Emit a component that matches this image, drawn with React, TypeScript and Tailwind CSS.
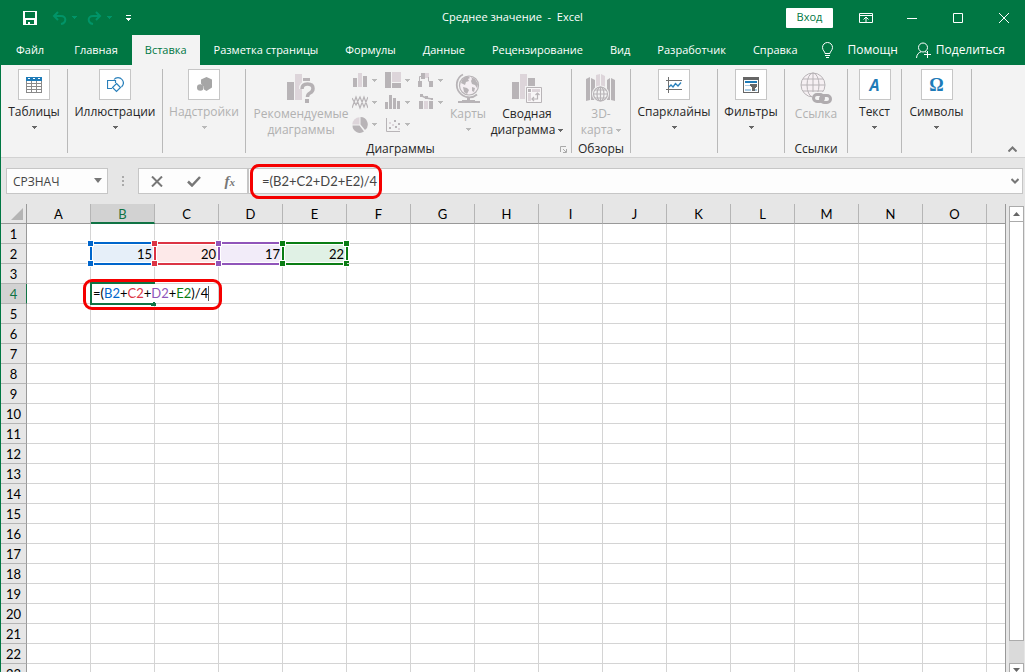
import type { ReactNode } from "react";
import clsx from "clsx";

const tabs = [
  "Файл",
  "Главная",
  "Вставка",
  "Разметка страницы",
  "Формулы",
  "Данные",
  "Рецензирование",
  "Вид",
  "Разработчик",
  "Справка",
];

const columns = "ABCDEFGHIJKLMNO".split("");
const rows = Array.from({ length: 23 }, (_, i) => i + 1);

const ranges: Record<string, { value: number; box: string; handle: string }> = {
  B: { value: 15, box: "border-[#0066cc] bg-[#e6eff9]", handle: "bg-[#0066cc]" },
  C: { value: 20, box: "border-[#dc3545] bg-[#fde9e9]", handle: "bg-[#dc3545]" },
  D: { value: 17, box: "border-[#9055ba] bg-[#f2ecf9]", handle: "bg-[#9055ba]" },
  E: { value: 22, box: "border-[#0a7d14] bg-[#e0f1e5]", handle: "bg-[#0a7d14]" },
};

function Caret({ className = "text-[#666]" }: { className?: string }) {
  return (
    <svg className={clsx("shrink-0", className)} width="5" height="3" viewBox="0 0 5 3" fill="currentColor" shapeRendering="crispEdges">
      <path d="M0 0h5v1H0zM1 1h3v1H1zM2 2h1v1H2z" />
    </svg>
  );
}

function TitleBar() {
  return (
    <header className="relative flex h-[35px] items-center justify-between text-white">
      <div className="flex items-center pl-[23px]">
        <button aria-label="Сохранить">
          <svg width="14" height="14" viewBox="0 0 14 14" shapeRendering="crispEdges">
            <path fill="#fff" fillRule="evenodd" d="M0 0h14v14H0zM2 1v6h10V1zM3 9v4h2v-2h2v2h4V9z" />
          </svg>
        </button>
        <button aria-label="Отменить" className="ml-[15px] flex items-center gap-[5px] text-[#009468]">
          <svg width="15" height="14" viewBox="0 0 15 14" fill="none" stroke="currentColor" strokeWidth="2">
            <path d="M6 1L2 5l4 4M2 5h7c6 0 5.500 7 0 8" />
          </svg>
          <Caret className="text-[#009468]" />
        </button>
        <button aria-label="Вернуть" className="ml-[10px] flex items-center gap-[5px] text-[#009468]">
          <svg width="15" height="14" viewBox="0 0 15 14" fill="none" stroke="currentColor" strokeWidth="2">
            <path d="M9 1l4 4-4 4M13 5H6C0 5 .5 12 6 13" />
          </svg>
          <Caret className="text-[#009468]" />
        </button>
        <button aria-label="Настройка панели" className="ml-[14px]">
          <svg width="6" height="6" viewBox="0 0 6 6" fill="#fff" shapeRendering="crispEdges">
            <path d="M0 0h5v1H0zM0 3h5v1H0zM1 4h3v1H1zM2 5h1v1H2z" />
          </svg>
        </button>
      </div>
      <h1 className="absolute left-1/2 -translate-x-1/2 whitespace-pre text-[11px]">Среднее значение  -  Excel</h1>
      <div className="flex items-center pr-4">
        <button className="mr-[26px] h-5 w-[47px] rounded-[1px] bg-white pb-px text-[11px] leading-[18px] text-[#007743]">Вход</button>
        <button aria-label="Параметры ленты" className="mr-[34px]">
          <svg width="14" height="10" viewBox="0 0 14 10" fill="none" stroke="#fff">
            <path d="M.5.5h13v9H.5zM.5 2.500h13M7 9V4M4.500 6.500L7 4l2.500 2.500" />
          </svg>
        </button>
        <button aria-label="Свернуть" className="mr-9">
          <svg width="10" height="10" viewBox="0 0 10 10" stroke="#fff"><path d="M0 5.500h10" /></svg>
        </button>
        <button aria-label="Развернуть" className="mr-9">
          <svg width="10" height="10" viewBox="0 0 10 10" fill="none" stroke="#fff"><path d="M.5.5h9v9h-9z" /></svg>
        </button>
        <button aria-label="Закрыть">
          <svg width="10" height="10" viewBox="0 0 10 10" stroke="#fff"><path d="M0 0l10 10M10 0L0 10" /></svg>
        </button>
      </div>
    </header>
  );
}

function TabBar() {
  return (
    <nav className="flex h-[30px] items-stretch justify-between whitespace-nowrap pl-[3px] text-white">
      <div className="flex gap-px text-[11px]">
        {tabs.map((tab) => (
          <button
            key={tab}
            className={clsx(
              "px-[13px]",
              tab === "Файл" && "mr-[3px]",
              tab === "Вставка" && "bg-[#f3f3f3] text-[#007743]",
            )}
          >
            {tab}
          </button>
        ))}
      </div>
      <div className="flex items-center pr-5 text-xs">
        <button className="flex items-center gap-[13px]">
          <svg width="13" height="17" viewBox="0 0 13 17" fill="none" stroke="#fff">
            <path d="M4 11.500C4 9.500 1.500 8.500 1.500 5.500a5 5 0 0 1 10 0C11.500 8.500 9 9.500 9 11.500zM4 13.500h5M5 15.500h3" />
          </svg>
          Помощн
        </button>
        <button className="ml-[18px] flex items-center gap-1">
          <svg width="16" height="17" viewBox="0 0 16 17" fill="none" stroke="#fff">
            <circle cx="7" cy="5.500" r="4.500" />
            <path d="M.5 16c.3-3.500 2-5.500 4.500-6.200M9 9.500l1.500 1M11.500 9v7M8 12.500h7" />
          </svg>
          Поделиться
        </button>
      </div>
    </nav>
  );
}

function Group({ className, children }: { className: string; children: ReactNode }) {
  return <section className={clsx("relative shrink-0 border-r border-[#b9b9b9]", className)}>{children}</section>;
}

// collapsed ribbon group: framed icon, label and a drop-down arrow
function CollapsedGroup({ label, width, disabled, children }: { label: string; width: string; disabled?: boolean; children: ReactNode }) {
  return (
    <Group className={width}>
      <button
        disabled={disabled}
        className={clsx("flex w-full flex-col items-center whitespace-nowrap", disabled ? "text-[#b1b1b1]" : "text-[#262626]")}
      >
        <span className="flex h-[31px] w-8 items-center justify-center border border-[#c6c6c6] bg-white">{children}</span>
        <span className="mt-1 mb-[6px] leading-4">{label}</span>
        <Caret className={disabled ? "text-[#b9b9b9]" : "text-[#666]"} />
      </button>
    </Group>
  );
}

function GroupTitle({ children, className }: { children: ReactNode; className?: string }) {
  return <h2 className={clsx("absolute inset-x-0 bottom-[-4px] text-center leading-4 text-[#262626]", className)}>{children}</h2>;
}

const D = "#b8b4b7";
const L = "#ddd5da";

function TableIcon() {
  return (
    <svg width="16" height="16" viewBox="0 0 16 16" shapeRendering="crispEdges">
      <path fill="#8a8a8a" d="M0 4h16v12H0z" />
      <path fill="#1e7bb8" d="M0 0h16v4H0z" />
      <path fill="#fff" d="M2 1h2v1H2zM7 1h2v1H7zM12 1h2v1h-2zM1 4h4v2H1zM6 4h4v2H6zM11 4h4v2h-4zM1 7h4v2H1zM6 7h4v2H6zM11 7h4v2h-4zM1 10h4v2H1zM6 10h4v2H6zM11 10h4v2h-4zM1 13h4v2H1zM6 13h4v2H6zM11 13h4v2h-4z" />
    </svg>
  );
}

function ShapesIcon() {
  return (
    <svg width="17" height="16" viewBox="0 0 17 16" fill="none" stroke="#2a80bb">
      <path d="M5 11.500H.5v-8h8V6M7 2.500C9 0 13 0 15 2.500s1.500 5.500-.5 7.500" strokeWidth="1.200" />
      <path d="M9.500 6.500l4 4-4 4-4-4z" strokeWidth="1.200" />
    </svg>
  );
}

function AddinsIcon() {
  return (
    <svg width="15" height="15" viewBox="0 0 15 15" fill="#a6a6a6">
      <path d="M9.500 0L15 2.500v8L9.500 14 7 12.500V10L4 6.500v-4z" />
      <circle cx="3.300" cy="10.500" r="3.300" />
    </svg>
  );
}

function SparklineIcon() {
  return (
    <svg width="16" height="16" viewBox="0 0 16 16" fill="none">
      <path d="M2.500 0v16M0 3.500h16M0 12.500h16" stroke="#707070" />
      <path d="M3 10l2-2 2 2 2.500-3.500L12 9l3-3.500" stroke="#2a80bb" strokeWidth="1.300" />
    </svg>
  );
}

function FilterIcon() {
  return (
    <svg width="16" height="16" viewBox="0 0 16 16" shapeRendering="crispEdges">
      <path fill="#666" d="M0 0h16v16H0z" />
      <path fill="#fff" d="M1 3h14v12H1z" />
      <path fill="#1e7bb8" d="M2 4h12v2H2z" />
      <path fill="#a8cbe4" d="M2 8h5v1H2zM2 12h6v2H2zM12 12h2v2h-2z" />
      <path fill="#666" d="M7 7h7v2l-2 2v3H9v-3L7 9z" />
    </svg>
  );
}

function RecommendedIcon() {
  return (
    <svg width="29" height="30" viewBox="0 0 29 30">
      <path fill={D} d="M0 9h7v18H0zM16 5h7v3h-7z" />
      <path fill={L} d="M8 1h7v26H8z" />
      <path d="M15 16q0-5 5.500-5t5.500 4.500q0 3-3 4.500-2.500 1-2.500 4" fill="none" stroke="#f3f3f3" strokeWidth="6" />
      <path d="M15 16q0-5 5.500-5t5.500 4.500q0 3-3 4.500-2.500 1-2.500 4" fill="none" stroke="#b5b1b4" strokeWidth="3.500" />
      <path fill="#b5b1b4" d="M18 26h4v4h-4z" />
    </svg>
  );
}

const chartIcons: { label: string; icon: ReactNode }[] = [
  { label: "Гистограмма", icon: <><path fill={D} d="M1 6h4v9H1zM11 4h4v11h-4z" /><path fill={L} d="M6 1h4v14H6z" /></> },
  { label: "Иерархия", icon: <><path fill={D} d="M0 0h6v16H0zM7 11h9v5H7z" /><path fill={L} d="M7 0h9v10H7z" /></> },
  { label: "Каскадная", icon: <><path fill={D} d="M0 9h4v6H0zM3 1h4v6H3zM11 9h4v6h-4z" /><path fill={L} d="M7 1h4v5H7z" /><path d="M1.500 9V4.500H3M10.500 5v4.500" fill="none" stroke={D} /></> },
  { label: "График", icon: <path d="M0 14L4 3l4 11 4-11 4 11M0 4l4 7 4-8 4 10 4-10" fill="none" stroke={D} strokeWidth="1.200" /> },
  { label: "Статистическая", icon: <path fill={D} d="M0 8h3v7H0zM4 1h3v14H4zM8 4h3v11H8zM12 7h3v8h-3z" /> },
  { label: "Комбинированная", icon: <><path fill={D} d="M1 7h4v8H1zM11 7h4v8h-4z" /><path fill={L} d="M6 7h4v8H6z" /><path d="M3 1.500L8 4l6 1" fill="none" stroke={D} strokeWidth="1.500" /><path fill={D} d="M2 0h3v3H2zM7 2h3v3H7zM13 4h2v2h-2z" /></> },
  { label: "Круговая", icon: <><path fill={D} d="M8.500 0v7.500L13 13a7.300 7.300 0 0 0-4.500-13zM7.500 8.500H.5A7.300 7.300 0 0 0 12 14.500z" /><path fill={L} d="M7.500.3V7.500H.3A7.300 7.300 0 0 1 7.500.3z" /></> },
  { label: "Точечная", icon: <><path d="M1.500 1v13.500H15" fill="none" stroke={D} /><path fill={D} d="M4 10h2v2H4zM9 3h2v2H9zM13 6h2v2h-2zM10 9h2v2h-2z" /><path fill={L} d="M4 5h2v2H4zM7 7h2v2H7zM13 11h2v2h-2z" /></> },
];

function MapsIcon() {
  return (
    <svg width="26" height="30" viewBox="0 0 26 30">
      <circle cx="14" cy="12.500" r="9.500" fill="#f5eff3" stroke={D} strokeWidth="1.200" />
      <path fill={D} d="M7 7q2-3 6-4l2 2-2 1 1 2-3 1-1 3-2-1-2-1zM16 4l4 2 3 5-1 4-2-3-3-1-1-3 1-2zM8 14l4 1 2 2-2 4-3-2zM17 14l3 1-1 4-2-1z" />
      <path d="M8 1.500C1 5 0 14 4.500 19.500S17 26 22 21.500" fill="none" stroke={D} strokeWidth="1.800" />
      <path fill={D} d="M12 24h3v4h-3zM7 27h13v1H7zM3 28h22v2H3z" />
    </svg>
  );
}

function PivotChartIcon() {
  return (
    <svg width="30" height="30" viewBox="0 0 30 30">
      <path fill={D} d="M0 9h7v17H0zM16 5h7v9h-7z" />
      <path fill={L} d="M8 1h7v25H8z" />
      <path fill="#f3f3f3" d="M13 13h17v17H13z" />
      <path d="M14.500 14.500h15v15h-15z" fill="#f8f6f7" stroke={D} />
      <path d="M16 16h3v3h-3z" fill={D} />
      <path d="M20 16h8v3h-8zM16 20h3v8h-3z" fill={L} />
      <path d="M25.500 20v6H20M23.500 22l2-2 2 2M22 24l-2 2 2 2" fill="none" stroke={D} strokeWidth="1.200" />
    </svg>
  );
}

function Map3dIcon() {
  return (
    <svg width="30" height="30" viewBox="0 0 30 30">
      <path fill={D} d="M0 6l4-2v23l-4 1zM5 5l4 2v20H5zM21 7l3-2v22h-3zM25 5l4 2v21l-4-1z" />
      <path fill={L} d="M10 2l4-1v26h-4zM15 1l4 2v24h-4z" />
      <circle cx="14.500" cy="21" r="8.500" fill="#f3f3f3" />
      <g fill="none" stroke={D} strokeWidth="1.200">
        <circle cx="14.500" cy="21" r="7" />
        <ellipse cx="14.500" cy="21" rx="3.500" ry="7" />
        <path d="M14.500 14v14M7.500 21h14M9 17h11M9 25h11" />
      </g>
    </svg>
  );
}

function LinkIcon() {
  return (
    <svg width="32" height="32" viewBox="0 0 32 32" fill="none">
      <g stroke={D}>
        <circle cx="13" cy="13" r="12" fill="#f6f0f3" />
        <ellipse cx="13" cy="13" rx="6" ry="12" />
        <path d="M13 1v24M1 13h24M3 7h20M3 19h20" />
      </g>
      <path d="M12 20h20v12H12z" fill="#f3f3f3" />
      <g stroke="#b0acaf" strokeWidth="3">
        <rect x="13.500" y="22.500" width="10" height="7" rx="3.500" />
        <rect x="20.500" y="23.500" width="10" height="7" rx="3.500" />
      </g>
    </svg>
  );
}

function Ribbon() {
  return (
    <div className="relative flex h-[93px] border-b border-[#d2d2d2] bg-[#f3f3f3] py-1 text-xs">
      <CollapsedGroup label="Таблицы" width="w-[67px]"><TableIcon /></CollapsedGroup>
      <CollapsedGroup label="Иллюстрации" width="w-[95px]"><ShapesIcon /></CollapsedGroup>
      <CollapsedGroup label="Надстройки" width="w-[83px]" disabled><AddinsIcon /></CollapsedGroup>
      <Group className="flex w-[326px] text-[#b1b1b1]">
        <button disabled className="ml-2 flex w-[94px] flex-col items-center pt-1 leading-4">
          <RecommendedIcon />
          <span className="mt-[3px]">Рекомендуемые диаграммы</span>
        </button>
        <div className="mr-[5px] ml-1 grid h-[67px] w-[91px] grid-cols-3 grid-rows-3 gap-x-2">
          {chartIcons.map(({ label, icon }) => (
            <button key={label} disabled aria-label={label} className="flex items-center gap-1">
              <svg className="shrink-0" width="16" height="16" viewBox="0 0 16 16">{icon}</svg>
              <Caret className="text-[#b9b9b9]" />
            </button>
          ))}
        </div>
        <button disabled className="flex w-10 flex-col items-center pt-1 leading-4">
          <MapsIcon />
          <span className="mt-[3px] mb-[6px]">Карты</span>
          <Caret className="text-[#b9b9b9]" />
        </button>
        <button className="flex w-[78px] flex-col items-center pt-1 leading-4 text-[#262626]">
          <PivotChartIcon />
          <span className="mt-[3px]">Сводная</span>
          <span className="flex items-center gap-[3px]">диаграмма <Caret /></span>
        </button>
        <GroupTitle className="pr-4">Диаграммы</GroupTitle>
        <button aria-label="Параметры диаграмм" className="absolute right-1 bottom-0">
          <svg width="7" height="7" viewBox="0 0 7 7" fill="none" stroke="#aaa">
            <path d="M.5 6V.5H6M3 3l3 3M6.500 3v3.500H3" />
          </svg>
        </button>
      </Group>
      <Group className="w-[59px] text-[#b1b1b1]">
        <button disabled className="flex w-full flex-col items-center pt-1 leading-4">
          <Map3dIcon />
          <span className="mt-[3px]">3D-</span>
          <span className="flex items-center gap-[3px]">карта <Caret className="text-[#b9b9b9]" /></span>
        </button>
        <GroupTitle>Обзоры</GroupTitle>
      </Group>
      <CollapsedGroup label="Спарклайны" width="w-[87px]"><SparklineIcon /></CollapsedGroup>
      <CollapsedGroup label="Фильтры" width="w-[67px]"><FilterIcon /></CollapsedGroup>
      <Group className="w-[63px] text-[#b1b1b1]">
        <button disabled className="flex w-full flex-col items-center pt-[3px] leading-4">
          <LinkIcon />
          <span className="mt-[2px]">Ссылка</span>
        </button>
        <GroupTitle>Ссылки</GroupTitle>
      </Group>
      <CollapsedGroup label="Текст" width="w-[54px]">
        <span className="font-['Open_Sans',sans-serif] text-base font-bold italic text-[#1e7bb8]">A</span>
      </CollapsedGroup>
      <CollapsedGroup label="Символы" width="w-[70px]">
        <span className="font-['Liberation_Serif',serif] text-lg font-bold text-[#1e7bb8]">Ω</span>
      </CollapsedGroup>
      <button aria-label="Свернуть ленту" className="mt-auto mr-2 ml-auto mb-px">
        <svg width="9" height="6" viewBox="0 0 9 6" fill="none" stroke="#777" strokeWidth="2"><path d="M.5 5.500l4-4 4 4" /></svg>
      </button>
    </div>
  );
}

function FormulaBar() {
  return (
    <div className="flex items-center bg-[#e6e6e6] pt-[10px] pr-[2px] pb-[10px] pl-[5px] text-xs text-[#444]">
      <div className="relative">
        <input
          aria-label="Имя"
          defaultValue="СРЗНАЧ"
          className="block h-[26px] w-[102px] border border-[#c6c6c6] bg-[#fdfdfd] px-[6px] outline-none"
        />
        <svg className="absolute top-[10px] right-[6px]" width="8" height="5" viewBox="0 0 8 5" fill="#777"><path d="M0 0h8L4 5z" /></svg>
      </div>
      <svg className="mx-[14px]" width="2" height="11" viewBox="0 0 2 11" fill="#aaa"><path d="M0 0h2v2H0zM0 4h2v2H0zM0 8h2v2H0z" /></svg>
      <div className="flex h-[26px] w-[110px] items-center justify-around border border-[#c6c6c6] bg-[#fdfdfd]">
        <button aria-label="Отмена">
          <svg width="12" height="11" viewBox="0 0 12 11" fill="none" stroke="#777" strokeWidth="2"><path d="M1 .5l10 10M11 .5l-10 10" /></svg>
        </button>
        <button aria-label="Ввод">
          <svg width="14" height="11" viewBox="0 0 14 11" fill="none" stroke="#777" strokeWidth="2.500"><path d="M1 5.500L5 9.500 13 1" /></svg>
        </button>
        <button aria-label="Вставить функцию" className="font-['Liberation_Serif',serif] text-[15px] leading-4 font-bold italic text-[#777]">
          f<span className="text-[11px]">x</span>
        </button>
      </div>
      <div className="relative flex-1">
        <input
          aria-label="Строка формул"
          defaultValue="=(B2+C2+D2+E2)/4"
          className="block h-[26px] w-full border border-[#c6c6c6] bg-[#fdfdfd] px-[13px] font-[Lato,sans-serif] text-[13px] outline-none"
        />
        <div className="pointer-events-none absolute -top-1 left-[2px] h-[35px] w-[132px] rounded-[9px] border-3 border-[#f50000]" />
        <button aria-label="Развернуть строку формул" className="absolute top-[10px] right-1">
          <svg width="8" height="6" viewBox="0 0 8 6" fill="none" stroke="#777" strokeWidth="2"><path d="M.5 1L4 4.500 7.500 1" /></svg>
        </button>
      </div>
    </div>
  );
}

function RangeCell({ value, box, handle }: { value: number; box: string; handle: string }) {
  const corner = clsx("absolute size-[5px] outline-1 outline-white", handle);
  return (
    <>
      <span className={clsx("absolute -top-[2px] -right-[2px] -bottom-[2px] -left-px border-2 outline-1 -outline-offset-3 outline-white", box)}>
        <i className={clsx(corner, "-top-[3px] -left-[4px]")} />
        <i className={clsx(corner, "-top-[3px] -right-[3px]")} />
        <i className={clsx(corner, "-bottom-[3px] -left-[4px]")} />
        <i className={clsx(corner, "-right-[3px] -bottom-[3px]")} />
      </span>
      <span className="relative">{value}</span>
    </>
  );
}

function FormulaEditor() {
  return (
    <>
      <span className="absolute -top-[2px] -right-px -bottom-[2px] -left-px border-2 border-[#107344]" />
      <span
        role="textbox"
        aria-label="Ячейка B4"
        className="absolute top-0 left-px flex h-[18px] w-[125px] items-center bg-white pt-px pl-px text-left whitespace-nowrap"
      >
        =(<span className="text-[#0066cc]">B2</span>+<span className="text-[#dc3545]">C2</span>+
        <span className="text-[#9055ba]">D2</span>+<span className="text-[#0a7d14]">E2</span>)/4
        <i className="h-[15px] w-px bg-[#555]" />
      </span>
      <i className="absolute -right-[2px] -bottom-[3px] h-[3px] w-[5px] bg-[#107344]" />
      <span className="pointer-events-none absolute -top-[5px] -left-2 h-[31px] w-[139px] rounded-[9px] border-3 border-[#f50000]" />
    </>
  );
}

function Sheet() {
  return (
    <div className="flex min-h-0 flex-1 items-stretch bg-[#e6e6e6]">
      <div className="min-w-0 flex-1 overflow-hidden border-r border-[#999]">
        <table className="w-full table-fixed border-separate border-spacing-0 font-[Lato,sans-serif] text-[13px] leading-[17px] text-black">
          <colgroup>
            <col className="w-[26px]" />
            {columns.map((c) => <col key={c} className="w-16" />)}
            <col />
          </colgroup>
          <thead>
            <tr className="h-5">
              <th className="border-r border-b border-[#999] p-0">
                <svg className="mr-[3px] ml-auto" width="12" height="12" viewBox="0 0 12 12" fill="#b4b4b4"><path d="M12 0v12H0z" /></svg>
              </th>
              {columns.map((c) => (
                <th
                  key={c}
                  className={clsx(
                    "border-r border-r-[#b5b5b5] p-0 pt-[2px] font-normal",
                    c === "B" ? "border-b-2 border-b-[#107344] bg-[#d2d2d2] leading-4 text-[#107344]" : "border-b border-b-[#999]",
                  )}
                >
                  {c}
                </th>
              ))}
              <th className="border-b border-[#999] p-0" />
            </tr>
          </thead>
          <tbody>
            {rows.map((r) => (
              <tr key={r} className="h-5 bg-white">
                <th
                  className={clsx(
                    "border-r border-b border-b-[#b5b5b5] p-0 pt-[2px] font-normal",
                    r === 4 ? "border-r-[#107344] bg-[#d2d2d2] text-[#107344]" : "border-r-[#999] bg-[#e6e6e6]",
                  )}
                >
                  {r}
                </th>
                {columns.map((c) => (
                  <td
                    key={c}
                    className={clsx(
                      "border-r border-b border-[#d4d4d4] p-0 pt-[2px] pr-[2px] text-right",
                      (r === 2 || r === 4) && "relative",
                      r === 4 && c === "B" && "z-10",
                    )}
                  >
                    {r === 2 && ranges[c] && <RangeCell {...ranges[c]} />}
                    {r === 4 && c === "B" && <FormulaEditor />}
                  </td>
                ))}
                <td className="border-b border-[#d4d4d4] p-0" />
              </tr>
            ))}
          </tbody>
        </table>
      </div>
      <div className="ml-[3px] flex w-4 flex-col pt-[2px]">
        <button aria-label="Вверх" className="flex h-4 w-[15px] shrink-0 items-center justify-center border border-[#ababab] bg-white">
          <svg width="7" height="4" viewBox="0 0 7 4" fill="#666"><path d="M3.500 0L7 4H0z" /></svg>
        </button>
        <div className="w-[15px] flex-1 bg-[#dadada]">
          <div className="h-[95%] border border-t-0 border-[#ababab] bg-white" />
        </div>
        <button aria-label="Вниз" className="flex h-[9px] w-[15px] shrink-0 items-end justify-center border border-b-0 border-[#ababab] bg-white">
          <svg width="7" height="4" viewBox="0 0 7 4" fill="#666"><path d="M0 0h7L3.500 4z" /></svg>
        </button>
      </div>
    </div>
  );
}

export default function App() {
  return (
    <div className="flex h-screen flex-col overflow-hidden bg-[#007743] font-['Open_Sans','Noto_Sans',sans-serif]">
      <TitleBar />
      <TabBar />
      <main className="flex min-h-0 flex-1 flex-col border-l border-[#007743]">
        <Ribbon />
        <FormulaBar />
        <Sheet />
      </main>
    </div>
  );
}
